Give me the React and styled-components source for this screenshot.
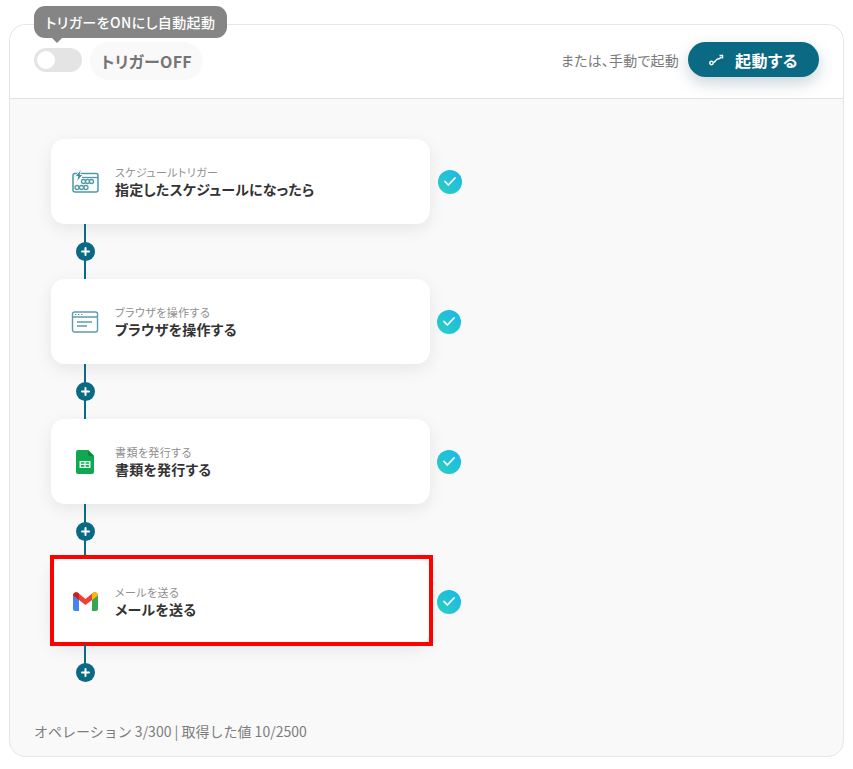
import React from "react"
import styled, { createGlobalStyle } from "styled-components"

const teal = "#0b6a83"

const GlobalStyle = createGlobalStyle`
  html, body {
    margin: 0;
    padding: 0;
    background: #fff;
    font-family: "Noto Sans CJK JP", "Noto Sans", sans-serif;
    font-feature-settings: "palt";
  }
`

const Page = styled.div`
  width: 853px;
  height: 769px;
  box-sizing: border-box;
  padding: 24px 9px 12px 9px;
`

const Panel = styled.section`
  height: 733px;
  box-sizing: border-box;
  border: 1px solid #e6e6e6;
  border-radius: 16px;
  background: #f9f9f9;
  display: flex;
  flex-direction: column;
  overflow: visible;
`

const Header = styled.header`
  position: relative;
  height: 74px;
  flex-shrink: 0;
  box-sizing: border-box;
  background: #fff;
  border-bottom: 1px solid #e2e2e2;
  border-radius: 16px 16px 0 0;
  padding: 17px 24px 0 24px;
  display: flex;
  align-items: flex-start;
`

const Tooltip = styled.div`
  position: absolute;
  left: 24px;
  top: -19px;
  width: 193px;
  height: 32px;
  border-radius: 11px;
  background: #858585;
  color: #fff;
  font-size: 14px;
  font-weight: 500;
  letter-spacing: 0.4px;
  line-height: 32px;
  text-align: center;
  white-space: nowrap;

  &::after {
    content: "";
    position: absolute;
    left: 18px;
    bottom: -5px;
    border-left: 5px solid transparent;
    border-right: 5px solid transparent;
    border-top: 5px solid #858585;
  }
`

const Toggle = styled.div`
  width: 48px;
  height: 24px;
  margin-top: 6px;
  border-radius: 12px;
  background: #e4e4e4;
  box-sizing: border-box;
  padding: 3px;
  flex-shrink: 0;

  div {
    width: 18px;
    height: 18px;
    border-radius: 50%;
    background: #fff;
  }
`

const TriggerState = styled.div`
  margin-left: 8px;
  width: 113px;
  height: 38px;
  border-radius: 19px;
  background: #f9f9f9;
  color: #757575;
  font-size: 16px;
  font-weight: 700;
  letter-spacing: 0.3px;
  line-height: 38px;
  text-align: center;
`

const Manual = styled.div`
  margin-left: auto;
  display: flex;
  align-items: center;
  gap: 9px;
`

const ManualText = styled.span`
  color: #7a7a7a;
  font-size: 14px;
  letter-spacing: 0.2px;
`

const RunButton = styled.button`
  width: 131px;
  height: 35px;
  border: 0;
  border-radius: 18px;
  background: ${teal};
  color: #fff;
  font-family: inherit;
  font-feature-settings: "palt";
  font-size: 16px;
  font-weight: 700;
  letter-spacing: 0.5px;
  display: flex;
  align-items: center;
  justify-content: center;
  gap: 10px;
  padding: 0;
  box-shadow: 0 6px 16px rgba(11, 60, 80, 0.22);
`

const Flow = styled.div`
  flex: 1;
  padding: 40px 0 0 41px;
`

const Step = styled.div`
  display: flex;
  align-items: center;
  gap: ${(p) => (p.$first ? "8px" : "7px")};
`

const Card = styled.div`
  position: relative;
  width: 379px;
  height: 85px;
  box-sizing: border-box;
  background: #fff;
  border-radius: 14px;
  box-shadow: 0 5px 18px rgba(0, 0, 0, 0.08);
  padding: 0 20px;
  display: flex;
  align-items: center;
  gap: 16px;
`

const Highlight = styled.div`
  position: absolute;
  left: -1px;
  top: -4px;
  width: 383px;
  height: 91px;
  box-sizing: border-box;
  border: 4px solid #ff0000;
`

const IconSlot = styled.div`
  width: 28px;
  height: 28px;
  display: flex;
  align-items: center;
  justify-content: center;
  flex-shrink: 0;
`

const CardText = styled.div`
  display: flex;
  flex-direction: column;
  padding-top: 1px;
`

const CardLabel = styled.span`
  color: #8f8f8f;
  font-size: 11px;
  letter-spacing: 0.4px;
  line-height: 14px;
`

const CardTitle = styled.span`
  color: #333;
  font-size: 14px;
  font-weight: 700;
  letter-spacing: 0.2px;
  line-height: 21px;
`

const Check = styled.div`
  width: 24px;
  height: 24px;
  border-radius: 50%;
  background: linear-gradient(45deg, #2bd0c0, #1bb6ea);
  display: flex;
  align-items: center;
  justify-content: center;
`

const Connector = styled.div`
  position: relative;
  width: 68px;
  height: ${(p) => (p.$last ? "38px" : "55px")};
  display: flex;
  align-items: ${(p) => (p.$last ? "flex-end" : "center")};
  justify-content: center;

  &::before {
    content: "";
    position: absolute;
    left: 33px;
    top: 0;
    bottom: ${(p) => (p.$last ? "10px" : "0")};
    width: 2px;
    background: ${teal};
  }
`

const AddButton = styled.div`
  position: relative;
  width: 19px;
  height: 19px;
  border-radius: 50%;
  background: ${teal};
  display: flex;
  align-items: center;
  justify-content: center;
`

const Footer = styled.div`
  padding: 0 0 15px 24px;
  color: #7d7d7d;
  font-size: 14px;
  line-height: 20px;
  font-feature-settings: normal;
`

const ScheduleIcon = () => (
  <svg width="28" height="26" viewBox="0 0 28 26" fill="none" stroke="#4f98aa" strokeWidth="1.500">
    <rect x="2" y="4.500" width="25" height="18.500" rx="2" />
    <path d="M11 8.500h16" strokeWidth="1.300" />
    <path d="M10.500 0 4 7.500h3L5.500 13 12 5.500H9z" fill="#3e8a9e" stroke="#fff" strokeWidth=".8" />
    {[
      [12.500, 12.500], [16.500, 12.500], [20.500, 12.500],
      [6, 18.500], [10.500, 18.500], [15, 18.500],
    ].map(([x, y], i) => (
      <circle key={i} cx={x} cy={y} r="2" strokeWidth="1.300" />
    ))}
  </svg>
)

const BrowserIcon = () => (
  <svg width="28" height="22" viewBox="0 0 28 22" fill="none" stroke="#5b9cac" strokeWidth="1.400">
    <rect x="1.500" y="1" width="25" height="20" rx="2" />
    <path d="M1.500 6h25M6 11h15M6 15h10" />
    <path d="M4 3.500h1.400M7 3.500h1.400M10 3.500h1.400" strokeWidth="1" />
  </svg>
)

const SheetsIcon = () => (
  <svg width="18" height="24" viewBox="0 0 18 24">
    <path d="M2 0h10l6 6v16a2 2 0 0 1-2 2H2a2 2 0 0 1-2-2V2a2 2 0 0 1 2-2z" fill="#0da84f" />
    <path d="M12 0l6 6h-4.500a1.500 1.500 0 0 1-1.500-1.500z" fill="#0a8a40" />
    <path d="M3.500 11h11v7h-11z M5 12.300v1.500h3.300v-1.500z M9.700 12.300v1.500H13v-1.500z M5 15.100v1.600h3.300v-1.600z M9.700 15.100v1.600H13v-1.600z" fill="#e8f7ee" fillRule="evenodd" />
  </svg>
)

const GmailIcon = () => (
  <svg width="25" height="19" viewBox="0 0 25 19">
    <path d="M0 3v14a2 2 0 0 0 2 2h4V8z" fill="#4285f4" />
    <path d="M25 3v14a2 2 0 0 1-2 2h-4V8z" fill="#34a853" />
    <path d="M0 3.500C0 .7 3 -.8 5 .8L12.500 7 20 .8C22 -.8 25 .7 25 3.500L12.500 13z" fill="#ea4335" />
    <path d="M19 2 20 .8C22 -.8 25 .7 25 3.500L19 8z" fill="#fbbc04" />
    <path d="M0 3.500 6 8V2L5 .8C3 -.8 0 .7 0 3.500z" fill="#c5221f" />
  </svg>
)

const steps = [
  { label: "スケジュールトリガー", title: "指定したスケジュールになったら", icon: <ScheduleIcon /> },
  { label: "ブラウザを操作する", title: "ブラウザを操作する", icon: <BrowserIcon /> },
  { label: "書類を発行する", title: "書類を発行する", icon: <SheetsIcon /> },
  { label: "メールを送る", title: "メールを送る", icon: <GmailIcon />, marked: true },
]

const App = () => (
  <Page>
    <GlobalStyle />
    <Panel>
      <Header>
        <Tooltip>トリガーをONにし自動起動</Tooltip>
        <Toggle>
          <div />
        </Toggle>
        <TriggerState>トリガーOFF</TriggerState>
        <Manual>
          <ManualText>または、手動で起動</ManualText>
          <RunButton>
            <svg width="16" height="12" viewBox="0 0 16 12" fill="none" stroke="#fff" strokeWidth="1.400">
              <circle cx="2.500" cy="9" r="1.700" />
              <path d="M4.500 8.500C7 8 6.500 5 9 5c1.500 0 2-.5 3.500-2" />
              <path d="M10.500 1.500h3v3" />
            </svg>
            起動する
          </RunButton>
        </Manual>
      </Header>
      <Flow>
        {steps.map((s, i) => (
          <React.Fragment key={s.title}>
            <Step $first={i === 0}>
              <Card>
                <IconSlot>{s.icon}</IconSlot>
                <CardText>
                  <CardLabel>{s.label}</CardLabel>
                  <CardTitle>{s.title}</CardTitle>
                </CardText>
                {s.marked && <Highlight />}
              </Card>
              <Check>
                <svg width="14" height="11" viewBox="0 0 14 11" fill="none" stroke="#fff" strokeWidth="1.800" strokeLinecap="round" strokeLinejoin="round">
                  <path d="M2 5.500 5.300 9 12 2" />
                </svg>
              </Check>
            </Step>
            <Connector $last={i === steps.length - 1}>
              <AddButton>
                <svg width="9" height="9" viewBox="0 0 9 9" stroke="#fff" strokeWidth="2" strokeLinecap="round">
                  <path d="M4.500 1v7M1 4.500h7" />
                </svg>
              </AddButton>
            </Connector>
          </React.Fragment>
        ))}
      </Flow>
      <Footer>オペレーション 3/300 | 取得した値 10/2500</Footer>
    </Panel>
  </Page>
)

export default App
